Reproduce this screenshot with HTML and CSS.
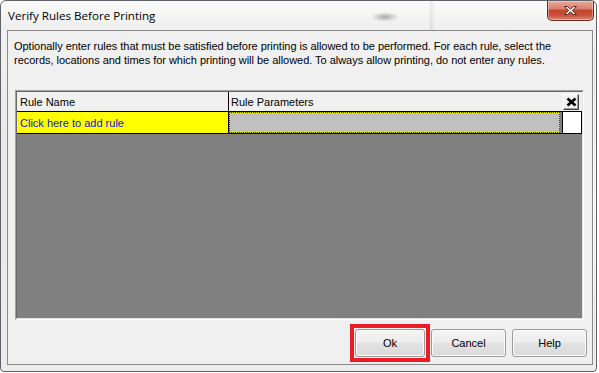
FILE: index.html
```html
<!DOCTYPE html>
<html>

<head>
    <meta charset="UTF-8">
    <title>Verify Rules Before Printing</title>

    <link rel="stylesheet" href="styles.css">

</head>

<body>

    <div class="window">
        <div class="titlebar">
            <span class="title">Verify Rules Before Printing</span>
            <button class="close" aria-label="Close">
                <svg width="17" height="11" viewBox="0 0 17 11">
                    <path d="M2.5 1.5h3l3 2.6 3-2.6h3l-4.3 4 4.3 4h-3l-3-2.6-3 2.6h-3l4.3-4z" fill="#fff" stroke="#5a2a22" stroke-width="1" stroke-linejoin="round" />
                </svg>
            </button>
        </div>

        <div class="client">
            <p class="intro">
                Optionally enter rules that must be satisfied before printing is allowed to be performed. For each rule, select the<br>
                records, locations and times for which printing will be allowed. To always allow printing, do not enter any rules.
            </p>

            <div class="grid">
                <div class="grid-inner">
                    <div class="row head">
                        <div class="cell name">Rule Name</div>
                        <div class="cell params">Rule Parameters</div>
                        <div class="cell del">
                            <span class="del-btn">
                                <svg width="11" height="10" viewBox="0 0 11 10">
                                    <path d="M1.5 1.5l8 7M9.5 1.5l-8 7" stroke="#000" stroke-width="2.6" />
                                </svg>
                            </span>
                        </div>
                    </div>
                    <div class="row">
                        <div class="cell name add">Click here to add rule</div>
                        <div class="cell params"><div class="focus"></div></div>
                        <div class="cell del blank"></div>
                    </div>
                    <div class="grid-empty"></div>
                </div>
            </div>

            <div class="footer">
                <div class="highlight">
                    <button class="btn ok">Ok</button>
                </div>
                <button class="btn cancel">Cancel</button>
                <button class="btn">Help</button>
            </div>
        </div>
    </div>

</body>

</html>
```

FILE: styles.css
```css
body {
    margin: 0;
    width: 599px;
    height: 373px;
    background: #ffffff;
    font-family: "Liberation Sans", Arial, sans-serif;
    font-size: 11px;
    overflow: hidden;
}

.window {
    width: 595px;
    height: 370px;
    border: 1px solid #5f6368;
    border-radius: 6px 6px 4px 4px;
    display: flex;
    flex-direction: column;
    background:
        radial-gradient(ellipse 60px 140px at 590px 200px, rgba(255, 255, 255, 0.7), transparent),
        linear-gradient(to bottom, #f3f3f3, #e9e9e9 40%, #ececec);
}

.titlebar {
    height: 29px;
    display: flex;
    align-items: flex-start;
    background:
        radial-gradient(ellipse 14px 5px at 384px 16px, rgba(110, 110, 110, 0.55), transparent),
        linear-gradient(to right, transparent 428px, rgba(0, 0, 0, 0.07) 430px, transparent 434px),
        linear-gradient(to bottom, #fbfbfb, #eeeeee);
    border-radius: 6px 6px 0 0;
}

.title {
    font-family: "Open Sans", "Noto Sans", sans-serif;
    font-size: 11.6px;
    color: #000;
    padding: 8px 0 0 7px;
    line-height: 14px;
}

.close {
    margin-left: auto;
    margin-right: 2px;
    width: 47px;
    height: 20px;
    padding: 0;
    border: 1px solid #6b2b22;
    border-top: none;
    border-radius: 0 0 5px 5px;
    background: linear-gradient(to bottom, #e9a99b 0%, #d9816f 40%, #c3442d 50%, #c9503a 75%, #dd8a76 100%);
    box-shadow: inset 0 0 0 1px rgba(255, 255, 255, 0.35);
    display: flex;
    align-items: center;
    justify-content: center;
}

.client {
    margin: 0 3px 6px 6px;
    width: 584px;
    height: 333px;
    border: 1px solid #8a8a8a;
    background: #f0f0f0;
    display: flex;
    flex-direction: column;
}

.intro {
    margin: 8px 0 0 6px;
    line-height: 14px;
    color: #000;
    white-space: nowrap;
    letter-spacing: -0.03px;
}

.grid {
    margin: 23px 8px 0 7px;
    flex: 1;
    border: 1px solid;
    border-color: #a0a0a0 #ffffff #ffffff #a0a0a0;
    display: flex;
}

.grid-inner {
    flex: 1;
    border: 1px solid;
    border-color: #696969 #e3e3e3 #e3e3e3 #696969;
    background: #808080;
    display: flex;
    flex-direction: column;
}

.row {
    display: flex;
    height: 21px;
    border-bottom: 1px solid #000;
    width: 565px;
}

.row.head {
    height: 19px;
    background: #f0f0f0;
}

.cell {
    display: flex;
    align-items: center;
    box-sizing: border-box;
}

.cell.name {
    width: 212px;
    border-right: 1px solid #000;
    padding-left: 3px;
}

.cell.params {
    width: 333px;
    padding-left: 2px;
}

.cell.del {
    width: 20px;
    justify-content: center;
}

.cell.add {
    background: #ffff00;
    color: #1010e0;
}

.focus {
    width: 331px;
    height: 21px;
    margin-left: -2px;
    box-sizing: border-box;
    border: 1px dotted #333;
    background: linear-gradient(#c0c0c0, #c0c0c0) padding-box, #dede00 border-box;
}

.cell.blank {
    background: #ffffff;
    border-left: 1px solid #000;
    border-right: 1px solid #000;
}

.del-btn {
    width: 16px;
    height: 16px;
    box-sizing: border-box;
    border: 1px solid;
    border-color: #ffffff #404040 #404040 #ffffff;
    box-shadow: inset -1px -1px 0 #a0a0a0;
    background: #f0f0f0;
    display: flex;
    align-items: center;
    justify-content: center;
    margin-left: -2px;
}

.grid-empty {
    flex: 1;
}

.footer {
    margin: 4px 5px 2px 0;
    height: 38px;
    display: flex;
    justify-content: flex-end;
    align-items: center;
}

.highlight {
    border: 4px solid #ed1c24;
    padding: 1px;
    margin-right: 1px;
}

.btn {
    width: 75px;
    height: 28px;
    padding: 0;
    border: 1px solid #9a9a9a;
    border-radius: 3px;
    background: linear-gradient(to bottom, #f4f4f4 0%, #ececec 50%, #e2e2e2 51%, #dadada 100%);
    box-shadow: inset 0 0 0 1px #fbfbfb;
    font-family: "Liberation Sans", Arial, sans-serif;
    font-size: 11px;
    color: #000;
}

.btn.ok {
    width: 70px;
    display: block;
}

.btn.cancel {
    margin-right: 6px;
}
```
